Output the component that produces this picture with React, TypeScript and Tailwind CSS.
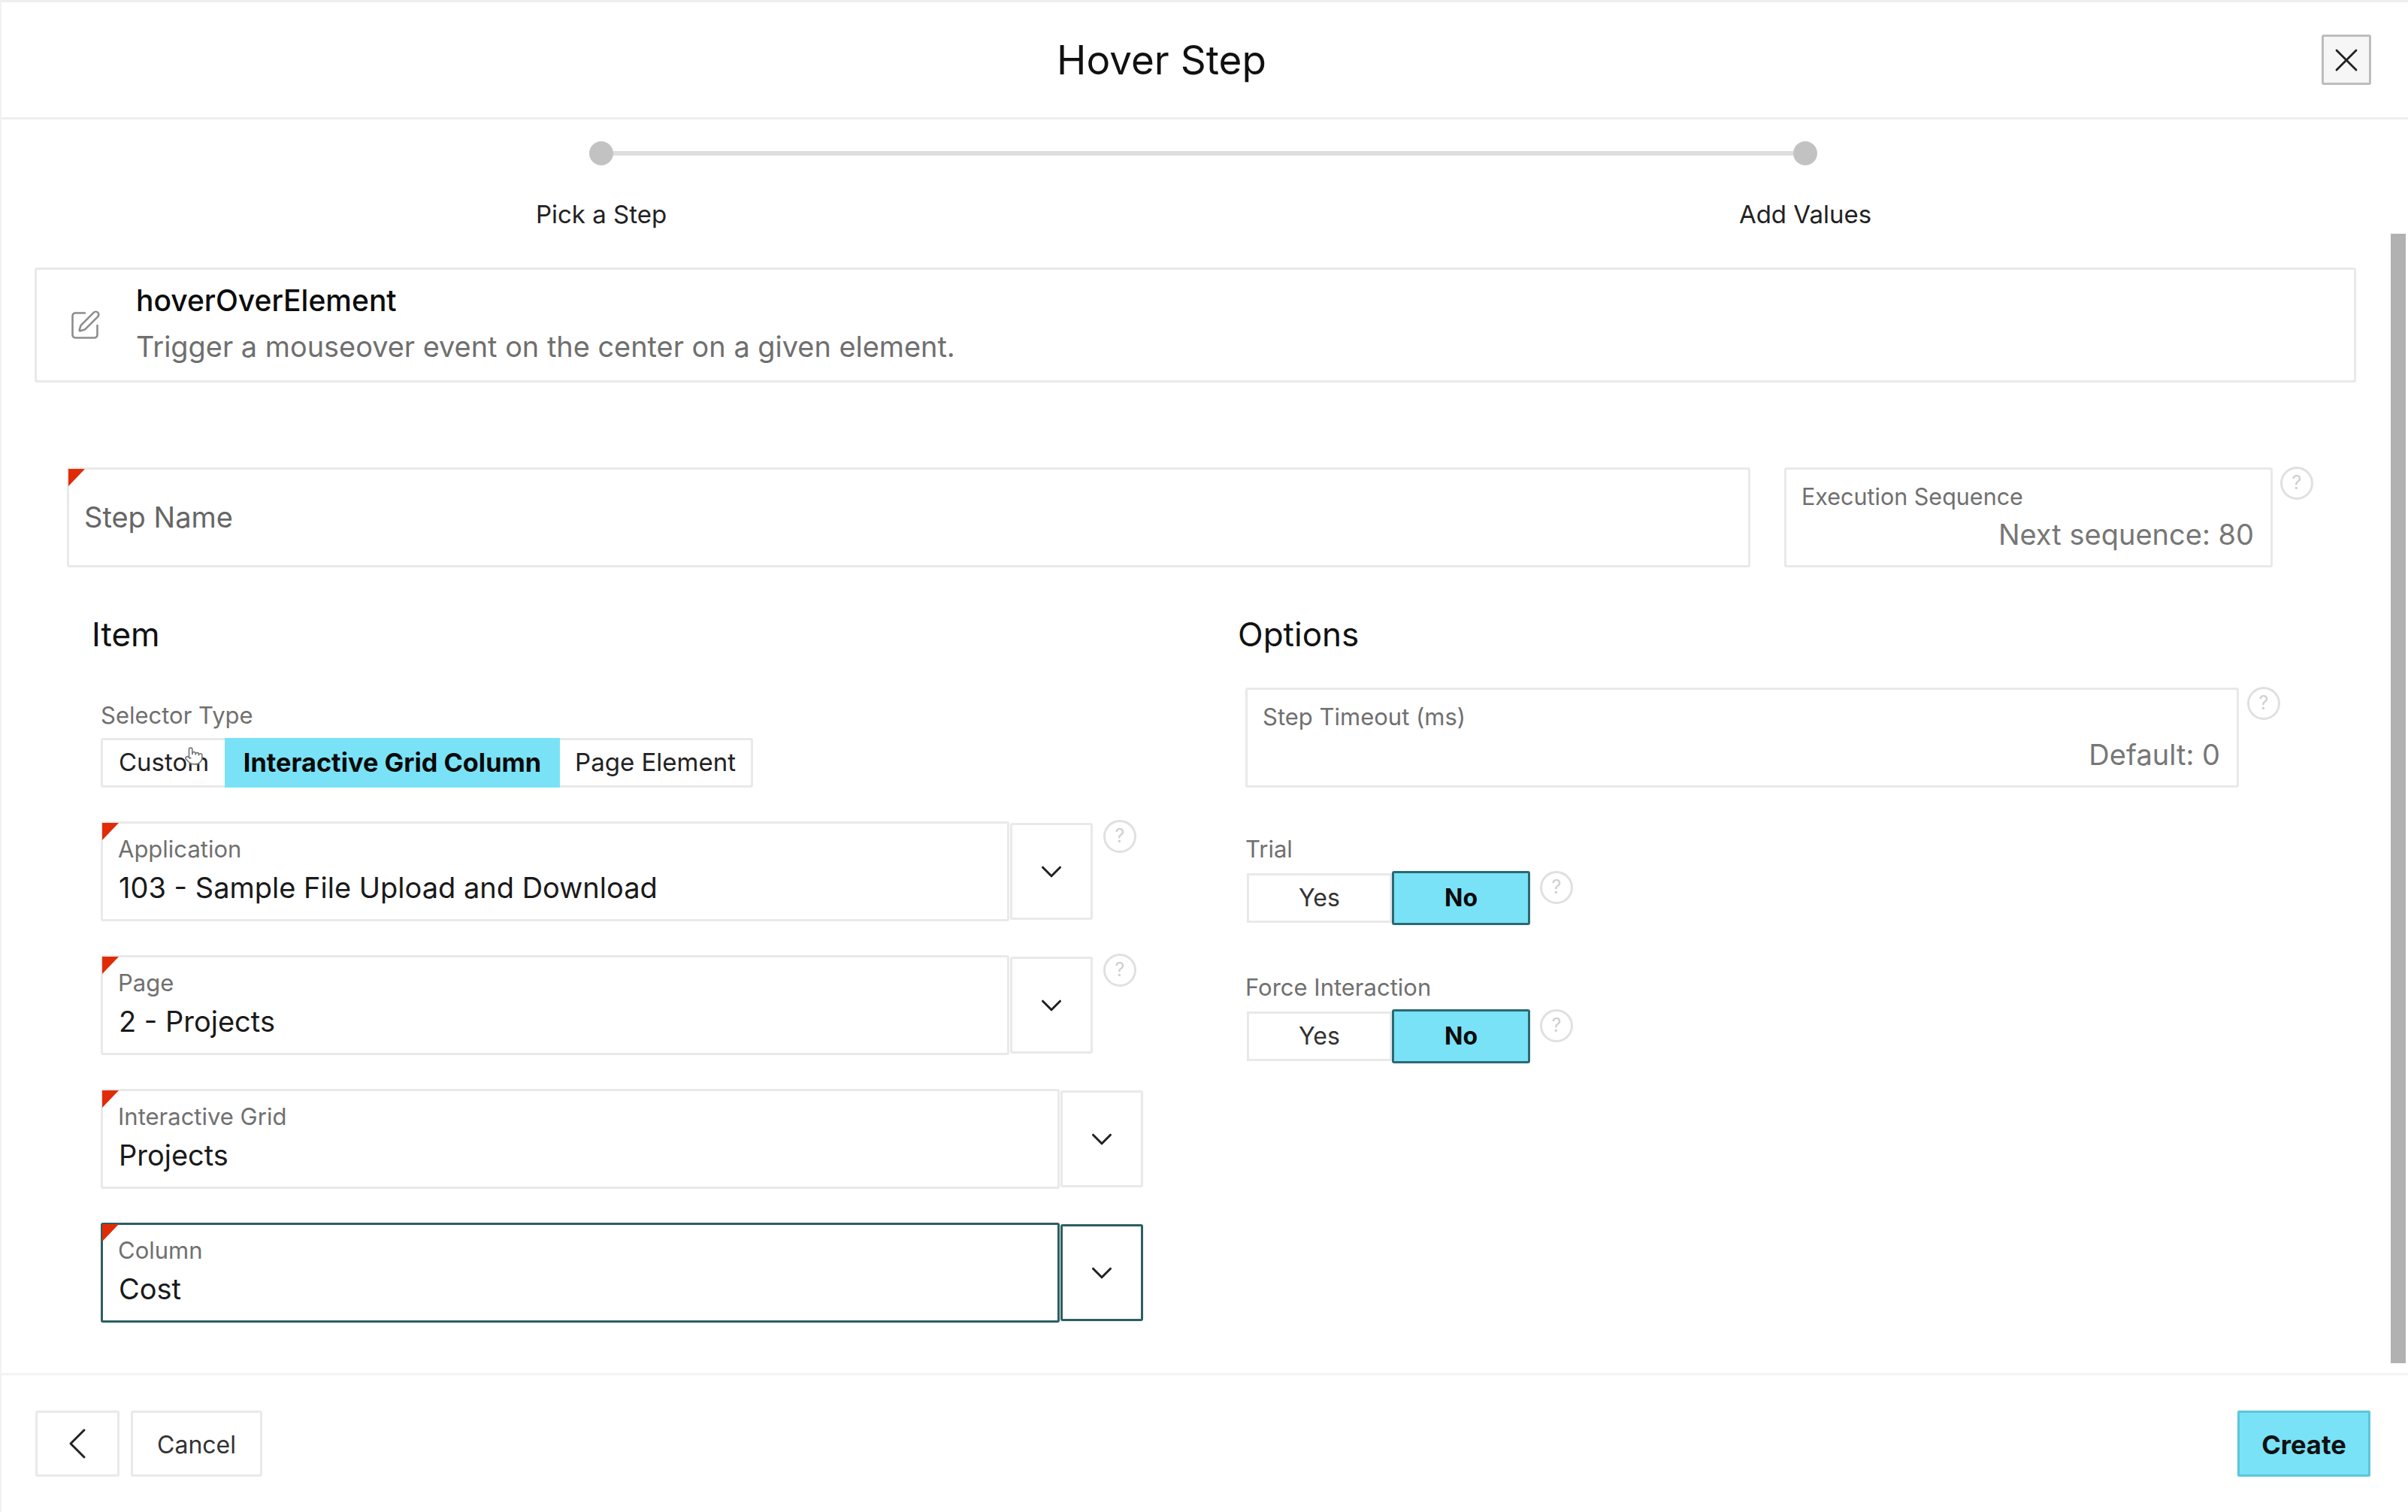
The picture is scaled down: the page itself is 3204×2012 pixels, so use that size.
import { ChevronDown, ChevronLeft, Pointer, SquarePen, X } from "lucide-react";

const fieldBorder = "border-[3px] border-[#e9e9e9] rounded-[3px]";

// little red wedge in the corner of required fields
function RequiredMark() {
  return <span className="absolute -left-[1px] -top-[1px] w-[22px] h-[23px] bg-[#e12b06] [clip-path:polygon(0_0,100%_0,0_100%)]" />;
}

function Help() {
  return (
    <span className="w-[44px] h-[44px] shrink-0 rounded-full border-[3px] border-[#e0e0e0] flex items-center justify-center text-[25px] text-[#cfcfcf]">
      ?
    </span>
  );
}

function SelectField({ label, value, width, focused, help }: { label: string; value: string; width: string; focused?: boolean; help?: boolean }) {
  const border = focused ? "border-[3px] border-[#2b5f63] rounded-[3px]" : fieldBorder;
  return (
    <div className="flex items-start h-[133px]">
      <div className={`relative h-[133px] ${width} ${border} pl-[20px] pt-[14px]`}>
        <RequiredMark />
        <div className="text-[31px] leading-[40px] text-[#707070]">{label}</div>
        <div className="text-[38px] leading-[50px] mt-[6px] ml-[1px] text-[#1a1a1a]">{value}</div>
      </div>
      <div className={`ml-[1px] w-[110px] h-[129px] mt-[2px] flex items-center justify-center ${border}`}>
        <ChevronDown size={46} strokeWidth={1.6} className="text-[#222]" />
      </div>
      {help && (
        <div className="ml-[14px] -mt-[2px]">
          <Help />
        </div>
      )}
    </div>
  );
}

function YesNo({ label }: { label: string }) {
  return (
    <div>
      <div className="text-[31px] leading-[36px] text-[#707070]">{label}</div>
      <div className="flex items-center mt-[11px] ml-[2px]">
        <div className="w-[193px] h-[66px] border-[3px] border-[#e9e9e9] flex items-center justify-center text-[32px] text-[#333]">Yes</div>
        <div className="w-[184px] h-[72px] border-[3px] border-[#2b6a73] rounded-[3px] bg-[#7ae2f7] flex items-center justify-center text-[32px] font-bold text-[#0a0a0a]">No</div>
        <div className="ml-[13px] self-start">
          <Help />
        </div>
      </div>
    </div>
  );
}

export default function App() {
  return (
    <div className="relative w-[3204px] h-[2012px] bg-white flex flex-col overflow-hidden border-l-[2px] border-[#f1f1f1] font-['Inter',sans-serif] text-[#111]">
      {/* Header */}
      <header className="h-[159px] shrink-0 flex items-center border-y-[3px] border-[#eeeeee]">
        <h1 className="flex-1 text-center text-[53px] leading-[64px] font-normal text-[#111]">Hover Step</h1>
        <button className="mr-[49px] w-[66px] h-[67px] flex items-center justify-center bg-[#f6f6f6] border-[3px] border-[#bdbdbd] rounded-[3px]">
          <X size={52} strokeWidth={1.3} className="text-[#222]" />
        </button>
      </header>

      <main className="relative flex-1 min-h-0">
        {/* Wizard progress */}
        <div className="flex items-center pl-[782px] pt-[29px]">
          <span className="w-[32px] h-[32px] rounded-full bg-[#c2c2c2]" />
          <span className="w-[1570px] h-[6px] bg-[#dedede]" />
          <span className="w-[32px] h-[32px] rounded-full bg-[#c2c2c2]" />
        </div>
        <div className="flex pl-[598px] gap-[1202px] mt-[45px] text-[33px] leading-[40px] text-[#222]">
          <div className="w-[400px] text-center">Pick a Step</div>
          <div className="w-[400px] text-center">Add Values</div>
        </div>

        {/* Step description */}
        <section className={`ml-[44px] mt-[51px] w-[3089px] h-[153px] flex items-center ${fieldBorder}`}>
          <SquarePen size={44} strokeWidth={1.4} className="ml-[42px] text-[#8c8c8c]" />
          <div className="ml-[46px] pb-[4px]">
            <div className="text-[39px] leading-[46px] font-medium text-[#0c0c0c]">hoverOverElement</div>
            <div className="text-[37.9px] leading-[46px] mt-[15px] text-[#6f6f6f]">Trigger a mouseover event on the center on a given element.</div>
          </div>
        </section>

        {/* Step name + sequence */}
        <div className="flex items-start ml-[87px] mt-[113px]">
          <div className={`relative w-[2240px] h-[133px] flex items-center pl-[20px] text-[38px] text-[#666] ${fieldBorder}`}>
            <RequiredMark />
            Step Name
          </div>
          <div className={`ml-[45px] w-[650px] h-[133px] pl-[20px] pr-[22px] pt-[18px] ${fieldBorder}`}>
            <div className="text-[30.5px] leading-[36px] text-[#707070]">Execution Sequence</div>
            <div className="text-[38px] leading-[46px] mt-[9px] text-right text-[#777]">Next sequence: 80</div>
          </div>
          <div className="ml-[10px] -mt-[1px]">
            <Help />
          </div>
        </div>

        <div className="flex mt-[63px]">
          {/* Item column */}
          <section className="ml-[120px] w-[1525px]">
            <h2 className="text-[44px] leading-[52px] font-normal text-[#111]">Item</h2>
            <div className="ml-[12px]">
              <div className="mt-[64px] text-[31px] leading-[36px] text-[#707070]">Selector Type</div>
              <div className={`relative mt-[12px] w-[868px] h-[66px] flex items-stretch text-[33px] text-[#222] ${fieldBorder}`}>
                <div className="w-[162px] flex items-center justify-center">Custom</div>
                <div className="w-[446px] -my-[3px] flex items-center justify-center bg-[#7ae2f7] font-bold text-[34.3px] text-[#0a0a0a]">Interactive Grid Column</div>
                <div className="flex-1 flex items-center justify-center">Page Element</div>
                <Pointer size={26} strokeWidth={1.5} className="absolute left-[108px] top-[8px] fill-white text-[#777]" />
              </div>
              <div className="mt-[45px] flex flex-col gap-[45px]">
                <SelectField label="Application" value="103 - Sample File Upload and Download" width="w-[1209px]" help />
                <SelectField label="Page" value="2 - Projects" width="w-[1209px]" help />
                <SelectField label="Interactive Grid" value="Projects" width="w-[1276px]" />
                <SelectField label="Column" value="Cost" width="w-[1276px]" focused />
              </div>
            </div>
          </section>

          {/* Options column */}
          <section className="flex-1">
            <h2 className="text-[44px] leading-[52px] font-normal text-[#111]">Options</h2>
            <div className="ml-[10px]">
              <div className="flex items-start mt-[45px]">
                <div className={`w-[1322px] h-[133px] pl-[20px] pr-[22px] pt-[18px] ${fieldBorder}`}>
                  <div className="text-[31px] leading-[36px] text-[#707070]">Step Timeout (ms)</div>
                  <div className="text-[38px] leading-[46px] mt-[9px] text-right text-[#777]">Default: 0</div>
                </div>
                <div className="ml-[11px] -mt-[1px]">
                  <Help />
                </div>
              </div>
              <div className="mt-[64px]">
                <YesNo label="Trial" />
              </div>
              <div className="mt-[65px]">
                <YesNo label="Force Interaction" />
              </div>
            </div>
          </section>
        </div>

        {/* Scrollbar thumb */}
        <div className="absolute right-[3px] top-[152px] w-[20px] h-[1503px] bg-[#b1b1b1]" />
      </main>

      {/* Footer */}
      <footer className="h-[185px] shrink-0 flex items-start justify-between pt-[47px] pl-[45px] pr-[50px] border-t-[3px] border-[#f3f3f3]">
        <div className="flex gap-[15px]">
          <button className={`w-[112px] h-[88px] flex items-center justify-center ${fieldBorder}`}>
            <ChevronLeft size={72} strokeWidth={1} className="text-[#222]" />
          </button>
          <button className={`w-[175px] h-[88px] pt-[3px] flex items-center justify-center text-[32px] text-[#333] ${fieldBorder}`}>Cancel</button>
        </div>
        <button className="w-[177px] h-[88px] pt-[3px] flex items-center justify-center bg-[#7ae2f7] border-[3px] border-[#5cc6dc] rounded-[2px] text-[34.5px] font-bold text-[#111]">Create</button>
      </footer>
    </div>
  );
}
